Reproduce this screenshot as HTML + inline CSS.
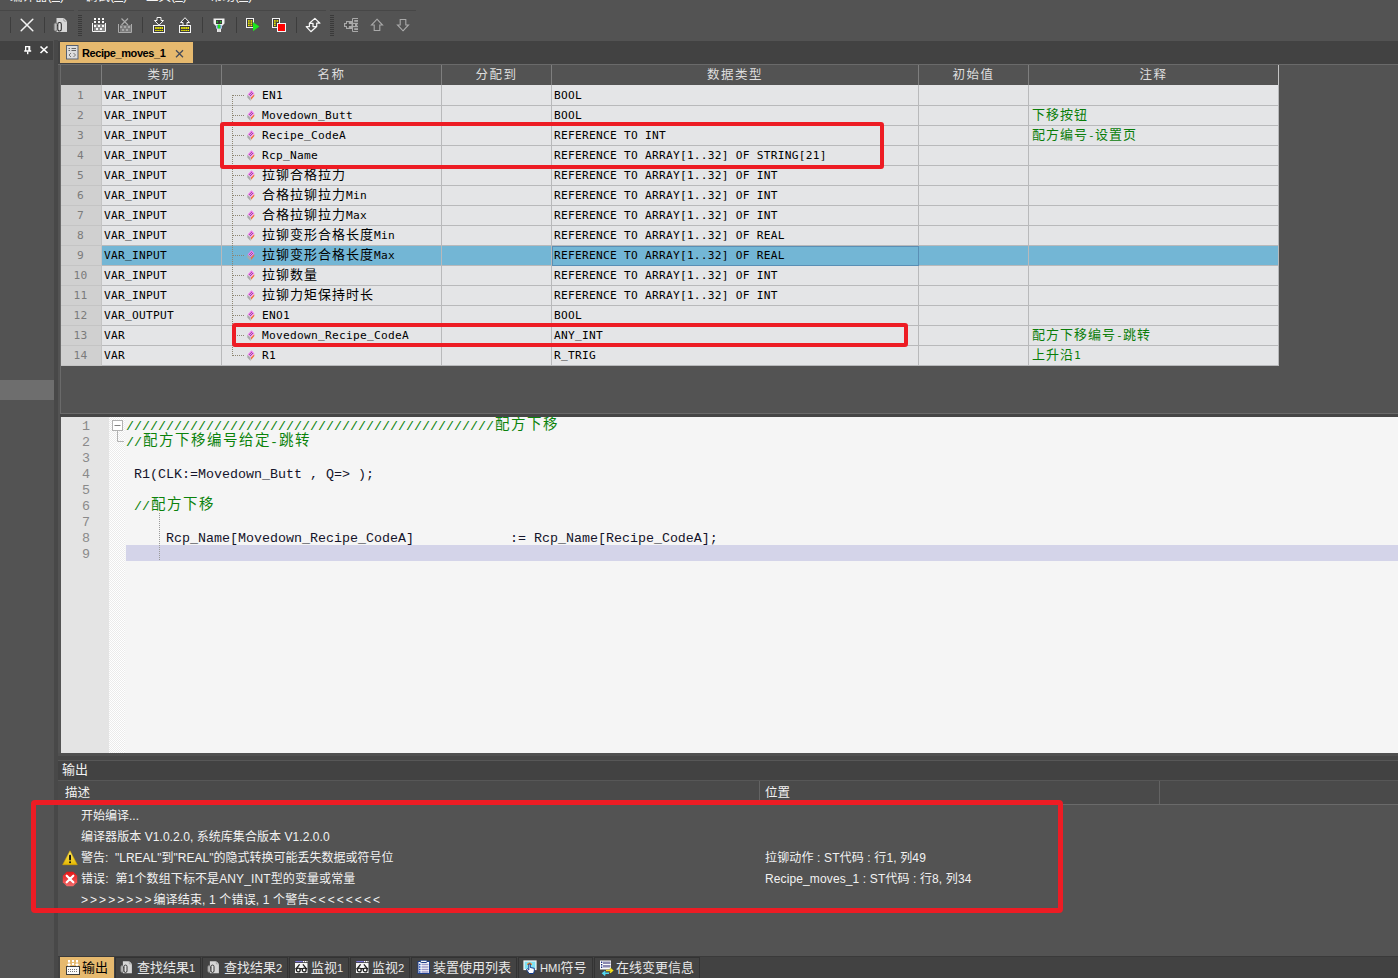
<!DOCTYPE html>
<html lang="zh-CN"><head><meta charset="utf-8"><title>Recipe_moves_1</title>
<style>
html,body{margin:0;padding:0}
body{width:1398px;height:978px;overflow:hidden;position:relative;background:#535353;font-family:"Liberation Sans","Noto Sans CJK SC",sans-serif;font-size:12px;color:#f0f0f0}
div,span,i,svg{position:absolute;box-sizing:border-box}
span{position:static}
.abs{position:absolute}
/* top */
#menu{left:0;top:-11.5px;width:1398px;height:15px;overflow:hidden;white-space:pre;font-size:12.5px;line-height:14px;color:#f4f4f4}
#menu b{font-weight:normal;position:relative;top:1.5px}
.tline{top:10px;height:1px;background:#474747}
.sep{top:17px;width:1px;height:16px;background:#3d3d3d}
.grip{top:15px;width:4px;height:22px;background:repeating-linear-gradient(to bottom,#3a3a3a 0,#3a3a3a 1px,transparent 1px,transparent 2px)}
.tb{top:17px;width:16px;height:16px}
#band{left:58px;top:41px;width:1340px;height:23px;background:#424242}
#lhead{left:0;top:41px;width:53px;height:19px;background:#424242}
#lbody{left:0;top:60px;width:54px;height:918px;background:#535353}
#lsel{left:0;top:380px;width:54px;height:20px;background:#6e6e6e}
#vdiv{left:54px;top:40px;width:4px;height:938px;background:#484848}
#tab{left:60px;top:42px;width:133px;height:21px;background:#e6b96e;color:#000;font-weight:bold;font-size:11px;line-height:21px;white-space:pre}
#tab .tt{position:absolute;left:22px;top:1px;letter-spacing:-0.42px}
/* grid */
#gtop{left:58px;top:64px;width:1340px;height:1px;background:#6a6a6a}
#gleft{left:60px;top:64px;width:1px;height:350px;background:#6a6a6a}
#gbot{left:60px;top:413px;width:1338px;height:1px;background:#6a6a6a}
#split{left:60px;top:414px;width:1338px;height:3px;background:#454545}
#grid{left:61px;top:65px;width:1218px;height:301px;font-family:"DejaVu Sans Mono","Noto Sans CJK SC",monospace;font-size:11.2px;letter-spacing:0.258px;color:#000}
#grid .c{font-family:"Noto Sans CJK SC",sans-serif;font-size:13px;letter-spacing:1px;line-height:0}
.u{position:relative;top:-1px}
.hdr{left:0;top:0;width:1218px;height:20px;background:#535353}
.hc{top:0;height:20px;border-right:1px solid #7e7e7e;color:#dedede;text-align:center;line-height:21px}
#grid .hc .c{font-size:12.5px;letter-spacing:1.5px}
.hc:last-child{border-right:1px solid #c4c4c4}
.row{left:0;width:1218px;height:20px;background:#e4e5e7}
.row.r1{height:21px}
.row.r1>div{padding-top:1px}
.row.r1 .ic{top:5px}
.row.r1 .st{top:10px}
.row.r1 .nm{top:1px}
.row.sel{background:#73b6d5}
.row>div{top:0;height:100%;border-right:1px solid #b8b9bb;border-bottom:1px solid #b8b9bb;line-height:19px;white-space:pre;overflow:hidden}
.rn{left:0;width:41px;background:#d0d0d0;color:#7b7b7b;border-color:#c4c4c4 !important;text-align:center;padding-right:1px}
.row.sel .rn{background:#d0d0d0}
.cl.k{left:41px;width:120px;padding-left:2px}
.cl.n{left:161px;width:220px}
.cl.a{left:381px;width:110px}
.cl.t{left:491px;width:367px;padding-left:2px}
.cl.v{left:858px;width:110px}
.cl.m{left:968px;width:250px;padding-left:3px;color:#0a7d0a}
.cl.t.foc{border:1px solid #5a8fb5;padding-left:1px;line-height:17px}
.nm{position:absolute;left:40px;top:0}
.ic{left:24px;top:4px}
.st{left:11px;top:9px;width:11px;height:1px;background:repeating-linear-gradient(to right,#8d8672 0,#8d8672 1px,transparent 1px,transparent 2px)}
.tree{left:171px;top:30px;width:1px;height:261px;background:repeating-linear-gradient(to bottom,#8d8672 0,#8d8672 1px,transparent 1px,transparent 2px)}
/* editor */
#ed{left:61px;top:417px;width:1337px;height:336px;background:#f5f5f5;font-family:"Liberation Mono","Noto Sans CJK SC",monospace;font-size:13.33px;color:#14142a}
#gut{left:0;top:0;width:48px;height:336px;background:#e4e4e4}
#fold{left:48px;top:0;width:16px;height:336px;background:#f1f1f1;background-image:conic-gradient(#fff 25%,#ebebeb 0 50%,#fff 0 75%,#ebebeb 0);background-size:2px 2px}
.ln{margin-top:2px;left:0;width:29px;height:16px;line-height:16px;text-align:right;color:#8a8a8a}
.cd{margin-top:2px;left:65px;height:16px;line-height:16px;white-space:pre}
.cd .c{font-family:"Noto Sans CJK SC",sans-serif;font-size:14.5px;letter-spacing:1.5px;line-height:0;position:relative;top:-1px;left:1px}
.g{color:#0b820b}
#cur{left:65px;top:128px;width:1272px;height:16px;background:#d4d4e9}
#guide{left:98px;top:96px;width:1px;height:48px;background:repeating-linear-gradient(to bottom,#9a9a9a 0,#9a9a9a 1px,transparent 1px,transparent 2px)}
/* output */
#o1{left:58px;top:753px;width:1340px;height:3px;background:#505050}
#o2{left:58px;top:756px;width:1340px;height:4px;background:#474747}
#o3{left:58px;top:760px;width:1340px;height:21px;background:#424242;border-top:1px solid #575757;border-bottom:1px solid #575757}
#otitle{left:62px;top:761px;height:19px;line-height:18px;font-size:13px;color:#f2f2f2}
#ohdr{left:58px;top:781px;width:1340px;height:24px;background:#4a4a4a;border-bottom:1px solid #6a6a6a}
.ohs{top:781px;width:1px;height:23px;background:#636363}
.oh{top:782px;height:22px;line-height:23px;font-size:12.5px;color:#f2f2f2}
.ol{height:21px;line-height:22px;font-size:12px;color:#f2f2f2;white-space:pre}
#btabs{left:58px;top:956px;width:1340px;height:22px;background:#424242;border-top:1px solid #3a3a3a}
.bt{top:957px;height:22px;background:#434343;border:1px solid #333;color:#e8e8e8;font-size:11.2px;line-height:20px;white-space:pre}
.bt .c{font-size:13px;line-height:0}
.bt.act{background:#e6b96e;border-color:#e6b96e;color:#000}
.bt svg{left:4px;top:2px}
.bt .lb{position:absolute;left:21px;top:0}
.red{border:5px solid #ed1c24;border-radius:4px}
.red.r4{border-width:4px;border-radius:3px}

</style></head>
<body>
<svg width="0" height="0" style="left:0;top:0"><defs>
<g id="vic"><path d="M5.500 0.200 L8.400 3.600 L4.700 7.100 L1.700 4.600 Z" fill="#f57af5"/><g fill="#4a4a4a"><circle cx="5.500" cy="2.300" r="0.480"/><circle cx="4.500" cy="3.300" r="0.480"/><circle cx="6.500" cy="3.400" r="0.480"/><circle cx="3.500" cy="4.300" r="0.480"/><circle cx="5.500" cy="4.400" r="0.480"/><circle cx="4.500" cy="5.400" r="0.480"/></g><path d="M1.300 4.800 L4.600 7.400 L4.600 10.900 L1.300 7.600 Z" fill="#ababab"/><path d="M5 7.400 L8.300 4.300 L8.300 6 L5 9.800 Z" fill="#f36a36"/></g>
<g id="findic"><path d="M3 0.500 H10.500 L13.500 3.500 V14.500 H3 Z" fill="#d6d6d6"/><path d="M10.500 0.500 V3.500 H13.500 Z" fill="#fbfbfb" stroke="#555" stroke-width="0.500"/><rect x="0.600" y="5.500" width="3" height="8" rx="1.500" fill="#bdbdbd" stroke="#777" stroke-width="0.900"/><rect x="4.300" y="5" width="3.500" height="8.500" rx="1.700" fill="#e2e2e2" stroke="#2e2e2e" stroke-width="1.100"/><path d="M3.600 8 H4.400" stroke="#333" stroke-width="1"/></g>
</defs></svg>
<div id="menu"><span class="abs" style="left:10px"><b>编译器</b>(<u>B</u>)</span><span class="abs" style="left:85px"><b>调试</b>(<u>D</u>)</span><span class="abs" style="left:146px"><b>工具</b>(<u>T</u>)</span><span class="abs" style="left:210px"><b>帮助</b>(<u>H</u>)</span></div>
<div class="tline" style="left:0;width:74px"></div>
<div class="tline" style="left:78px;width:248px"></div>
<div class="tline" style="left:330px;width:86px"></div>
<div class="sep" style="left:10px"></div>
<div class="sep" style="left:44px"></div>
<div class="sep" style="left:142px"></div>
<div class="sep" style="left:202px"></div>
<div class="sep" style="left:236px"></div>
<div class="sep" style="left:296px"></div>
<div class="grip" style="left:78px"></div>
<div class="grip" style="left:330px"></div>
<!-- toolbar icons -->
<svg class="tb" style="left:19px" viewBox="0 0 16 16"><path d="M2.2 2.2 L13.8 13.8 M13.8 2.2 L2.2 13.8" stroke="#f4f4f4" stroke-width="1.5" stroke-linecap="round"/></svg>
<svg class="tb" style="left:53px" viewBox="0 0 16 16"><use href="#findic" transform="translate(0.5,0.5)"/></svg>
<svg class="tb" style="left:91px" viewBox="0 0 16 16"><rect x="3" y="7" width="11" height="8" fill="#8b8b8b"/><path d="M1.5 6 V14.5 H14.5 V6" stroke="#f6f6f6" stroke-width="1" fill="none"/><g fill="#fafafa"><rect x="3" y="1" width="2" height="2"/><rect x="7" y="1" width="2" height="2"/><rect x="11" y="1" width="2" height="2"/><rect x="3" y="4" width="2" height="2"/><rect x="7" y="4" width="2" height="2"/><rect x="11" y="4" width="2" height="2"/><rect x="3" y="8" width="2" height="2"/><rect x="7" y="8" width="2" height="2"/><rect x="11" y="8" width="2" height="2"/><rect x="5" y="11" width="2" height="2"/><rect x="9" y="11" width="2" height="2"/></g></svg>
<svg class="tb" style="left:117px" viewBox="0 0 16 16"><rect x="3" y="8" width="11" height="7" fill="#7c7c7c"/><path d="M1.5 7 V15.5 H14.5 V7" stroke="#ababab" stroke-width="1" fill="none"/><path d="M4.5 1.5 L11 8 M11 1.5 L4.5 8" stroke="#ababab" stroke-width="1.2"/><g fill="#a6a6a6"><rect x="3" y="9" width="2" height="2"/><rect x="7" y="9" width="2" height="2"/><rect x="11" y="9" width="2" height="2"/><rect x="5" y="12" width="2" height="2"/><rect x="9" y="12" width="2" height="2"/></g></svg>
<svg class="tb" style="left:151px" viewBox="0 0 16 16"><rect x="2.500" y="8.500" width="11" height="7" fill="#3e3e3e" stroke="#f6f6f6"/><path d="M6 0.500 H10 V3.500 H12.500 L8 8.200 L3.500 3.500 H6 Z" fill="#444" stroke="#f6f6f6" stroke-width="1"/><g fill="#f4f000"><rect x="4.200" y="10" width="1.500" height="2"/><rect x="6.300" y="10" width="1.500" height="2"/><rect x="8.400" y="10" width="1.500" height="2"/><rect x="10.500" y="10" width="1.500" height="2"/><rect x="4.200" y="13" width="1.500" height="1"/><rect x="6.300" y="13" width="1.500" height="1"/><rect x="8.400" y="13" width="1.500" height="1"/><rect x="10.500" y="13" width="1.500" height="1"/></g></svg>
<svg class="tb" style="left:177px" viewBox="0 0 16 16"><rect x="2.500" y="8.500" width="11" height="7" fill="#3e3e3e" stroke="#f6f6f6"/><path d="M8 0.700 L12.500 5.500 H10 V8.500 H6 V5.500 H3.500 Z" fill="#444" stroke="#f6f6f6" stroke-width="1"/><g fill="#f4f000"><rect x="4.200" y="10" width="1.500" height="2"/><rect x="6.300" y="10" width="1.500" height="2"/><rect x="8.400" y="10" width="1.500" height="2"/><rect x="10.500" y="10" width="1.500" height="2"/><rect x="4.200" y="13" width="1.500" height="1"/><rect x="6.300" y="13" width="1.500" height="1"/><rect x="8.400" y="13" width="1.500" height="1"/><rect x="10.500" y="13" width="1.500" height="1"/></g></svg>
<svg class="tb" style="left:211px" viewBox="0 0 16 16"><path d="M2.500 1.500 H13.500 V6.500 L11 9 V11.500 H10 V15 H6 V11.500 H5 V9 L2.500 6.500 Z" fill="#f2f2f2"/><rect x="5" y="3" width="6" height="4" fill="#3b3b3b"/><rect x="5.700" y="4.300" width="1.300" height="1.300" fill="#22e022"/><rect x="9" y="4.300" width="1.300" height="1.300" fill="#22e022"/><rect x="5.500" y="8" width="5" height="3.500" fill="#7d95e8"/><rect x="6.700" y="7.500" width="2.600" height="4" fill="#1fe01f"/><rect x="6.500" y="12" width="3" height="3" fill="#d9d9d9"/></svg>
<svg class="tb" style="left:245px" viewBox="0 0 16 16"><rect x="1.500" y="1.500" width="7" height="9" fill="#3e3e3e" stroke="#f4f4f4"/><g fill="#f4f000"><rect x="3" y="3.200" width="1.700" height="1.500"/><rect x="5.500" y="3.200" width="1.700" height="1.500"/><rect x="3" y="5.400" width="1.700" height="1.500"/><rect x="5.500" y="5.400" width="1.700" height="1.500"/><rect x="3" y="7.600" width="1.700" height="1.500"/><rect x="5.500" y="7.600" width="1.700" height="1.500"/></g><path d="M8 5 L14.400 9.600 L8 14.300 Z" fill="#1de61d"/></svg>
<svg class="tb" style="left:271px" viewBox="0 0 16 16"><rect x="1.500" y="1.500" width="7" height="9" fill="#3e3e3e" stroke="#f4f4f4"/><g fill="#f4f000"><rect x="3" y="3.200" width="1.700" height="1.500"/><rect x="5.500" y="3.200" width="1.700" height="1.500"/><rect x="3" y="5.400" width="1.700" height="1.500"/><rect x="3" y="7.600" width="1.700" height="1.500"/></g><rect x="6.500" y="6.500" width="8" height="8" fill="#ff0000" stroke="#f4f4f4"/></svg>
<svg class="tb" style="left:305px" viewBox="0 0 16 16"><path d="M9.900 1.400 L14.900 6.200 H11.700 V9.500 L5.900 14.700 L1.200 9.600 H4.400 V6.300 Z M4.400 6.300 H8 V9.500 H11.700" fill="none" stroke="#f6f6f6" stroke-width="1.250" stroke-linejoin="round"/></svg>
<svg class="tb" style="left:343px" viewBox="0 0 16 16"><path d="M15 1.500 H9.500 V4.500 M9.500 11.500 V14.500 H15" fill="none" stroke="#a9a9a9" stroke-width="1"/><path d="M3 4 H10 V12 H3 V10 H1 V6 H3 Z" fill="#a9a9a9"/><rect x="4" y="5.200" width="1.800" height="5.600" fill="#4a4a4a"/><rect x="2.200" y="7.100" width="6.300" height="1.800" fill="#4a4a4a"/><rect x="9" y="5.800" width="6" height="4.400" fill="#a9a9a9"/><rect x="10.200" y="7.100" width="1.800" height="1.800" fill="#454545"/><rect x="14.200" y="7.100" width="0.800" height="1.800" fill="#555"/><rect x="11.200" y="3" width="3.800" height="1.800" fill="#a9a9a9"/><rect x="11.200" y="11.200" width="3.800" height="1.800" fill="#a9a9a9"/></svg>
<svg class="tb" style="left:369px" viewBox="0 0 16 16"><path d="M8 2.200 L13.500 8 H10.800 V13.500 H5.200 V8 H2.500 Z" fill="none" stroke="#a9a9a9" stroke-width="1.100"/></svg>
<svg class="tb" style="left:395px" viewBox="0 0 16 16"><path d="M8 13.800 L13.500 8 H10.800 V2.500 H5.200 V8 H2.500 Z" fill="none" stroke="#a9a9a9" stroke-width="1.100"/></svg>
<!-- band and left panel -->
<div id="band"></div>
<div id="lbody"></div>
<div id="lhead"></div>
<div id="lsel"></div>
<svg class="abs" style="left:23px;top:45px" width="10" height="10" viewBox="0 0 10 10"><path d="M2 1 H7.300 V5.200 H8.200 V6.700 H1.200 V5.200 H2 Z M3.300 2.200 V5.200 H5.300 V2.200 Z" fill="#fff" fill-rule="evenodd"/><rect x="4" y="6.500" width="1.400" height="2.700" fill="#fff"/></svg>
<svg class="abs" style="left:39px;top:45px" width="10" height="10" viewBox="0 0 10 10"><path d="M1.500 1.500 L8.500 8 M8.500 1.500 L1.500 8" stroke="#fff" stroke-width="1.700"/></svg>
<div id="vdiv"></div>
<div id="tab"><svg class="abs" style="left:6px;top:3px" width="13" height="15" viewBox="0 0 13 15"><rect x="0.500" y="0.500" width="11.500" height="13.500" fill="#dcdcdc" stroke="#566070"/><path d="M2.500 3.500 H4 M5.500 3.500 H10 M2.500 5.500 H4 M5.500 5.500 H10" stroke="#666" stroke-width="1"/><path d="M5 8 L3 10 L5 12 M7.500 8 L9.500 10 L7.500 12" stroke="#777" stroke-width="1" fill="none"/></svg><span class="tt">Recipe_moves_1</span><svg class="abs" style="left:114px;top:6px" width="11" height="11" viewBox="0 0 11 11"><path d="M2 2.200 L9 9.200 M9 2.200 L2 9.200" stroke="#454a58" stroke-width="1.300"/></svg></div>
<div id="gtop"></div><div id="gleft"></div><div id="gbot"></div><div id="split"></div>
<div id="grid">
<div class="hdr"><div class="hc" style="left:0;width:41px"></div><div class="hc" style="left:41px;width:120px"><span class="c">类别</span></div><div class="hc" style="left:161px;width:220px"><span class="c">名称</span></div><div class="hc" style="left:381px;width:110px"><span class="c">分配到</span></div><div class="hc" style="left:491px;width:367px"><span class="c">数据类型</span></div><div class="hc" style="left:858px;width:110px"><span class="c">初始值</span></div><div class="hc" style="left:968px;width:250px"><span class="c">注释</span></div></div>
<div class="row r1" style="top:20px"><div class="rn">1</div><div class="cl k">VAR<span class="u">_</span>INPUT</div><div class="cl n"><i class="st"></i><svg class="ic" width="10" height="12" viewBox="0 0 10 12"><use href="#vic"/></svg><span class="nm">EN1</span></div><div class="cl a"></div><div class="cl t">BOOL</div><div class="cl v"></div><div class="cl m"></div></div>
<div class="row" style="top:41px"><div class="rn">2</div><div class="cl k">VAR<span class="u">_</span>INPUT</div><div class="cl n"><i class="st"></i><svg class="ic" width="10" height="12" viewBox="0 0 10 12"><use href="#vic"/></svg><span class="nm">Movedown<span class="u">_</span>Butt</span></div><div class="cl a"></div><div class="cl t">BOOL</div><div class="cl v"></div><div class="cl m"><span class="c">下移按钮</span></div></div>
<div class="row" style="top:61px"><div class="rn">3</div><div class="cl k">VAR<span class="u">_</span>INPUT</div><div class="cl n"><i class="st"></i><svg class="ic" width="10" height="12" viewBox="0 0 10 12"><use href="#vic"/></svg><span class="nm">Recipe<span class="u">_</span>CodeA</span></div><div class="cl a"></div><div class="cl t">REFERENCE TO INT</div><div class="cl v"></div><div class="cl m"><span class="c">配方编号</span>-<span class="c">设置页</span></div></div>
<div class="row" style="top:81px"><div class="rn">4</div><div class="cl k">VAR<span class="u">_</span>INPUT</div><div class="cl n"><i class="st"></i><svg class="ic" width="10" height="12" viewBox="0 0 10 12"><use href="#vic"/></svg><span class="nm">Rcp<span class="u">_</span>Name</span></div><div class="cl a"></div><div class="cl t">REFERENCE TO ARRAY[1..32] OF STRING[21]</div><div class="cl v"></div><div class="cl m"></div></div>
<div class="row" style="top:101px"><div class="rn">5</div><div class="cl k">VAR<span class="u">_</span>INPUT</div><div class="cl n"><i class="st"></i><svg class="ic" width="10" height="12" viewBox="0 0 10 12"><use href="#vic"/></svg><span class="nm"><span class="c">拉铆合格拉力</span></span></div><div class="cl a"></div><div class="cl t">REFERENCE TO ARRAY[1..32] OF INT</div><div class="cl v"></div><div class="cl m"></div></div>
<div class="row" style="top:121px"><div class="rn">6</div><div class="cl k">VAR<span class="u">_</span>INPUT</div><div class="cl n"><i class="st"></i><svg class="ic" width="10" height="12" viewBox="0 0 10 12"><use href="#vic"/></svg><span class="nm"><span class="c">合格拉铆拉力</span>Min</span></div><div class="cl a"></div><div class="cl t">REFERENCE TO ARRAY[1..32] OF INT</div><div class="cl v"></div><div class="cl m"></div></div>
<div class="row" style="top:141px"><div class="rn">7</div><div class="cl k">VAR<span class="u">_</span>INPUT</div><div class="cl n"><i class="st"></i><svg class="ic" width="10" height="12" viewBox="0 0 10 12"><use href="#vic"/></svg><span class="nm"><span class="c">合格拉铆拉力</span>Max</span></div><div class="cl a"></div><div class="cl t">REFERENCE TO ARRAY[1..32] OF INT</div><div class="cl v"></div><div class="cl m"></div></div>
<div class="row" style="top:161px"><div class="rn">8</div><div class="cl k">VAR<span class="u">_</span>INPUT</div><div class="cl n"><i class="st"></i><svg class="ic" width="10" height="12" viewBox="0 0 10 12"><use href="#vic"/></svg><span class="nm"><span class="c">拉铆变形合格长度</span>Min</span></div><div class="cl a"></div><div class="cl t">REFERENCE TO ARRAY[1..32] OF REAL</div><div class="cl v"></div><div class="cl m"></div></div>
<div class="row sel" style="top:181px"><div class="rn">9</div><div class="cl k">VAR<span class="u">_</span>INPUT</div><div class="cl n"><i class="st"></i><svg class="ic" width="10" height="12" viewBox="0 0 10 12"><use href="#vic"/></svg><span class="nm"><span class="c">拉铆变形合格长度</span>Max</span></div><div class="cl a"></div><div class="cl t foc">REFERENCE TO ARRAY[1..32] OF REAL</div><div class="cl v"></div><div class="cl m"></div></div>
<div class="row" style="top:201px"><div class="rn">10</div><div class="cl k">VAR<span class="u">_</span>INPUT</div><div class="cl n"><i class="st"></i><svg class="ic" width="10" height="12" viewBox="0 0 10 12"><use href="#vic"/></svg><span class="nm"><span class="c">拉铆数量</span></span></div><div class="cl a"></div><div class="cl t">REFERENCE TO ARRAY[1..32] OF INT</div><div class="cl v"></div><div class="cl m"></div></div>
<div class="row" style="top:221px"><div class="rn">11</div><div class="cl k">VAR<span class="u">_</span>INPUT</div><div class="cl n"><i class="st"></i><svg class="ic" width="10" height="12" viewBox="0 0 10 12"><use href="#vic"/></svg><span class="nm"><span class="c">拉铆力矩保持时长</span></span></div><div class="cl a"></div><div class="cl t">REFERENCE TO ARRAY[1..32] OF INT</div><div class="cl v"></div><div class="cl m"></div></div>
<div class="row" style="top:241px"><div class="rn">12</div><div class="cl k">VAR<span class="u">_</span>OUTPUT</div><div class="cl n"><i class="st"></i><svg class="ic" width="10" height="12" viewBox="0 0 10 12"><use href="#vic"/></svg><span class="nm">ENO1</span></div><div class="cl a"></div><div class="cl t">BOOL</div><div class="cl v"></div><div class="cl m"></div></div>
<div class="row" style="top:261px"><div class="rn">13</div><div class="cl k">VAR</div><div class="cl n"><i class="st"></i><svg class="ic" width="10" height="12" viewBox="0 0 10 12"><use href="#vic"/></svg><span class="nm">Movedown<span class="u">_</span>Recipe<span class="u">_</span>CodeA</span></div><div class="cl a"></div><div class="cl t">ANY<span class="u">_</span>INT</div><div class="cl v"></div><div class="cl m"><span class="c">配方下移编号</span>-<span class="c">跳转</span></div></div>
<div class="row" style="top:281px"><div class="rn">14</div><div class="cl k">VAR</div><div class="cl n"><i class="st"></i><svg class="ic" width="10" height="12" viewBox="0 0 10 12"><use href="#vic"/></svg><span class="nm">R1</span></div><div class="cl a"></div><div class="cl t">R<span class="u">_</span>TRIG</div><div class="cl v"></div><div class="cl m"><span class="c">上升沿</span>1</div></div>
<div class="tree"></div>
</div>
<div class="red r4" style="left:220px;top:122px;width:664px;height:47px"></div>
<div class="red r4" style="left:232px;top:323px;width:676px;height:24px"></div>
<!-- editor -->
<div id="ed">
<div id="gut"></div><div id="fold"></div>
<div id="cur"></div>
<div class="ln" style="top:0">1</div><div class="ln" style="top:16px">2</div><div class="ln" style="top:32px">3</div><div class="ln" style="top:48px">4</div><div class="ln" style="top:64px">5</div><div class="ln" style="top:80px">6</div><div class="ln" style="top:96px">7</div><div class="ln" style="top:112px">8</div><div class="ln" style="top:128px">9</div>
<svg class="abs" style="left:51px;top:3px" width="13" height="23" viewBox="0 0 13 23"><path d="M5.500 10 V21.500 H12" stroke="#b2b2b2" fill="none"/><rect x="0.500" y="0.500" width="10" height="10" fill="#fff" stroke="#b2b2b2"/><path d="M2.500 5.500 H8.500" stroke="#808080"/></svg>
<div class="cd g" style="top:0">//////////////////////////////////////////////<span class="c">配方下移</span></div>
<div class="cd g" style="top:16px">//<span class="c">配方下移编号给定</span>-<span class="c">跳转</span></div>
<div class="cd" style="top:48px"> R1(CLK:=Movedown_Butt , Q=&gt; );</div>
<div class="cd g" style="top:80px"> //<span class="c">配方下移</span></div>
<div class="cd" style="top:112px">     Rcp_Name[Movedown_Recipe_CodeA]            := Rcp_Name[Recipe_CodeA];</div>
<div id="guide"></div>
</div>
<!-- output -->
<div id="o1"></div><div id="o2"></div><div id="o3"></div>
<div id="otitle">输出</div>
<div id="ohdr"></div>
<div class="ohs" style="left:759px"></div><div class="ohs" style="left:1159px"></div>
<div class="oh" style="left:65px">描述</div>
<div class="oh" style="left:765px">位置</div>
<div class="ol" style="left:81px;top:805px">开始编译...</div>
<div class="ol" style="left:81px;top:826px;letter-spacing:0.06px">编译器版本 V1.0.2.0, 系统库集合版本 V1.2.0.0</div>
<svg class="abs" style="left:62px;top:850px" width="16" height="16" viewBox="0 0 16 16"><defs><linearGradient id="wg" x1="0" y1="0" x2="0" y2="1"><stop offset="0" stop-color="#fff06a"/><stop offset="1" stop-color="#e6b800"/></linearGradient></defs><path d="M8 0.800 L15.300 14.700 H0.700 Z" fill="url(#wg)" stroke="#d9a800" stroke-width="0.600" stroke-linejoin="round"/><rect x="7.100" y="4.800" width="1.900" height="5.600" rx="0.800" fill="#111"/><rect x="7.100" y="11.300" width="1.900" height="1.900" rx="0.800" fill="#111"/></svg>
<div class="ol" style="left:81px;top:847px">警告:  "LREAL"到"REAL"的隐式转换可能丢失数据或符号位</div>
<div class="ol" style="left:765px;top:847px;letter-spacing:0.14px">拉铆动作 : ST代码 : 行1, 列49</div>
<svg class="abs" style="left:62px;top:871px" width="16" height="16" viewBox="0 0 16 16"><defs><linearGradient id="eg" x1="0" y1="0" x2="0" y2="1"><stop offset="0" stop-color="#e81414"/><stop offset="1" stop-color="#f26a6a"/></linearGradient></defs><path d="M4.800 0.800 H11.200 L15.200 4.800 V11.200 L11.200 15.200 H4.800 L0.800 11.200 V4.800 Z" fill="url(#eg)"/><path d="M4.700 4.700 L11.300 11.300 M11.300 4.700 L4.700 11.300" stroke="#fff" stroke-width="2.200" stroke-linecap="round"/></svg>
<div class="ol" style="left:81px;top:868px;letter-spacing:0.11px">错误:  第1个数组下标不是ANY_INT型的变量或常量</div>
<div class="ol" style="left:765px;top:868px;letter-spacing:0.12px">Recipe_moves_1 : ST代码 : 行8, 列34</div>
<div class="ol" style="left:81px;top:889px"><span style="letter-spacing:2.05px">&gt;&gt;&gt;&gt;&gt;&gt;&gt;&gt;</span><span style="letter-spacing:0.15px">编译结束, 1 个错误, 1 个警告</span><span style="letter-spacing:2.05px">&lt;&lt;&lt;&lt;&lt;&lt;&lt;&lt;</span></div>
<div class="red" style="left:31px;top:800px;width:1032px;height:113px"></div>
<!-- bottom tabs -->
<div id="btabs"></div>
<div class="bt act" style="left:60px;width:54px"><svg width="16" height="16" viewBox="0 0 16 16"><rect x="1.500" y="6.500" width="13" height="8" fill="#fafafa" stroke="#3c3c3c"/><path d="M3 9.500 H13 M3 11.500 H13" stroke="#777" stroke-dasharray="1 1"/><g fill="#fff"><rect x="3" y="0" width="2" height="2"/><rect x="7" y="0" width="2" height="2"/><rect x="11" y="0" width="2" height="2"/><path d="M3.500 2 H4.500 V4 H6 L4 6.500 L2 4 H3.500 Z M11.500 2 H12.500 V4 H14 L12 6.500 L10 4 H11.500 Z"/><rect x="7" y="3" width="2" height="2"/></g></svg><span class="lb"><span class="c">输出</span></span></div>
<div class="bt" style="left:115px;width:86px"><svg width="16" height="16" viewBox="0 0 16 16"><use href="#findic" transform="translate(0.300,0.800) scale(0.860)"/></svg><span class="lb"><span class="c">查找结果</span>1</span></div>
<div class="bt" style="left:202px;width:86px"><svg width="16" height="16" viewBox="0 0 16 16"><use href="#findic" transform="translate(0.300,0.800) scale(0.860)"/></svg><span class="lb"><span class="c">查找结果</span>2</span></div>
<div class="bt" style="left:289px;width:60px"><svg width="16" height="16" viewBox="0 0 16 16"><rect x="1" y="3" width="12.500" height="10" fill="#f6f6f6"/><rect x="1.300" y="1" width="7.500" height="1.200" fill="#7a74d8"/><rect x="9" y="1" width="1.200" height="1.200" fill="#fff"/><rect x="10.800" y="1" width="1.200" height="1.200" fill="#fff"/><rect x="12.400" y="1" width="1.100" height="1.200" fill="#fff"/><path d="M5.600 4.300 L2.200 8.600 M8.900 4.300 L12.300 8.600 M1.300 8.700 H13.200" stroke="#1e1e1e" stroke-width="1.300" fill="none"/><circle cx="4.300" cy="10" r="1.900" fill="#fff" stroke="#1e1e1e" stroke-width="1.300"/><circle cx="10.200" cy="10" r="1.900" fill="#fff" stroke="#1e1e1e" stroke-width="1.300"/></svg><span class="lb"><span class="c">监视</span>1</span></div>
<div class="bt" style="left:350px;width:60px"><svg width="16" height="16" viewBox="0 0 16 16"><rect x="1" y="3" width="12.500" height="10" fill="#f6f6f6"/><rect x="1.300" y="1" width="7.500" height="1.200" fill="#7a74d8"/><rect x="9" y="1" width="1.200" height="1.200" fill="#fff"/><rect x="10.800" y="1" width="1.200" height="1.200" fill="#fff"/><rect x="12.400" y="1" width="1.100" height="1.200" fill="#fff"/><path d="M5.600 4.300 L2.200 8.600 M8.900 4.300 L12.300 8.600 M1.300 8.700 H13.200" stroke="#1e1e1e" stroke-width="1.300" fill="none"/><circle cx="4.300" cy="10" r="1.900" fill="#fff" stroke="#1e1e1e" stroke-width="1.300"/><circle cx="10.200" cy="10" r="1.900" fill="#fff" stroke="#1e1e1e" stroke-width="1.300"/></svg><span class="lb"><span class="c">监视</span>2</span></div>
<div class="bt" style="left:411px;width:106px"><svg width="16" height="16" viewBox="0 0 16 16"><rect x="2" y="1.500" width="11.500" height="12" fill="#fdfdfd" stroke="#1f3f8a"/><rect x="4.500" y="0.200" width="6.500" height="2.300" rx="0.800" fill="#f4f4f4" stroke="#1f3f8a"/><path d="M5.500 4.500 H12.500 M5.500 7 H12.500 M5.500 9.500 H12.500 M5.500 12 H12.500" stroke="#9a98c8" stroke-width="1.400"/><path d="M3 4.500 H4.500 M3 7 H4.500 M3 9.500 H4.500 M3 12 H4.500" stroke="#1f4fc0" stroke-width="1.400"/></svg><span class="lb"><span class="c">装置使用列表</span></span></div>
<div class="bt" style="left:518px;width:75px"><svg width="16" height="16" viewBox="0 0 16 16"><rect x="1" y="1" width="12" height="8.500" fill="#7fe0f2" stroke="#f8f8f8" stroke-width="1.200"/><path d="M4 5 A2.500 2.500 0 0 1 9 5 Z" fill="#f58220"/><path d="M5.800 4 H7.300 V7.500 L11.300 8.300 V11 L10.500 13.500 H6 L3.500 9.500 L4.500 8.800 L5.800 10 Z" fill="#fff" stroke="#123c8c" stroke-width="1"/></svg><span class="lb">HMI<span class="c">符号</span></span></div>
<div class="bt" style="left:594px;width:106px"><svg width="16" height="16" viewBox="0 0 16 16"><rect x="1" y="0.500" width="11" height="9" fill="#fafafa"/><rect x="4" y="1.500" width="7.500" height="2.500" fill="#8a88b0"/><rect x="4" y="5" width="7.500" height="2.500" fill="#8a88b0"/><path d="M2 1.500 H3.300 V3 H2 Z M2 4 H3.300 V5.500 H2 Z M2 6.500 H3.300 V8 H2 Z" fill="#1a2a80"/><path d="M7 10.500 H12.800 M11 8.300 L13.500 10.500 L11 12.700" stroke="#f4e01a" stroke-width="1.500" fill="none"/><path d="M10 13.300 H4.500 M6.300 11.200 L3.800 13.300 L6.300 15.400" stroke="#52d6ee" stroke-width="1.500" fill="none"/></svg><span class="lb"><span class="c">在线变更信息</span></span></div>
</body></html>
